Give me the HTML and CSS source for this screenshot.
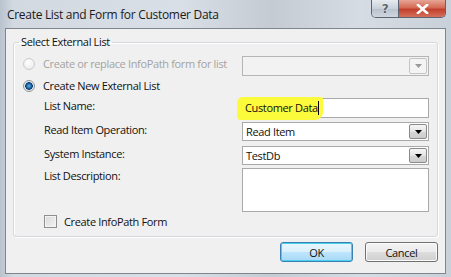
FILE: index.html
```html
<!DOCTYPE html>
<html lang="en">
<head>
  <meta charset="UTF-8" />
  <title>Create List and Form for Customer Data</title>
  <link rel="stylesheet" href="styles.css">
</head>
<body>

  <div class="window">
    <div class="titlebar">
      <span class="title">Create List and Form for Customer Data</span>
      <div class="caption-buttons">
        <div class="cap-btn help">?</div>
        <div class="cap-btn close">
          <svg width="13" height="10" viewBox="0 0 13 10">
            <path d="M2 1 L11 9 M11 1 L2 9" stroke="#fff" stroke-width="2.6" stroke-linecap="square" />
          </svg>
        </div>
      </div>
    </div>

    <div class="client">
      <fieldset class="group">
        <legend>Select External List</legend>

        <div class="row row-first">
          <div class="option disabled"><span class="radio"></span>Create or replace InfoPath form for list</div>
          <div class="combo disabled">
            <span class="arrow">
              <svg width="7" height="4" viewBox="0 0 7 4"><polygon points="0,0 7,0 3.5,4" fill="#9a9a9a" /></svg>
            </span>
          </div>
        </div>

        <div class="row row-new">
          <div class="option"><span class="radio checked"></span>Create New External List</div>
        </div>

        <div class="row row-name">
          <div class="field-label">List Name:</div>
          <div class="textbox">
            <span class="highlight"></span>
            <span class="value">Customer Data</span><span class="caret"></span>
          </div>
        </div>

        <div class="row row-read">
          <div class="field-label">Read Item Operation:</div>
          <div class="combo">
            <span class="value">Read Item</span>
            <span class="arrow">
              <svg width="7" height="4" viewBox="0 0 7 4"><polygon points="0,0 7,0 3.5,4" fill="#000" /></svg>
            </span>
          </div>
        </div>

        <div class="row row-system">
          <div class="field-label">System Instance:</div>
          <div class="combo">
            <span class="value">TestDb</span>
            <span class="arrow">
              <svg width="7" height="4" viewBox="0 0 7 4"><polygon points="0,0 7,0 3.5,4" fill="#000" /></svg>
            </span>
          </div>
        </div>

        <div class="row row-desc">
          <div class="field-label">List Description:</div>
          <div class="textarea"></div>
        </div>

        <div class="row row-check">
          <div class="field-label"><span class="checkbox"></span>Create InfoPath Form</div>
        </div>
      </fieldset>

      <div class="buttons">
        <button class="btn default">OK</button>
        <button class="btn">Cancel</button>
      </div>
    </div>
  </div>

</body>
</html>
```

FILE: styles.css
```css
:root {
  --frame: #c7d0da;
  --client-bg: #f0f0f0;
  --text: #111;
  --muted: #a3a3a3;
  --field-border: #a9a9a9;
  --font-stack: 'Open Sans', 'Noto Sans', sans-serif;
}

* {
  margin: 0;
  padding: 0;
  box-sizing: border-box;
}

body {
  width: 451px;
  height: 277px;
  overflow: hidden;
  font-family: var(--font-stack);
  font-size: 11px;
  letter-spacing: -0.35px;
  color: var(--text);
  background-color: var(--frame);
}

.window {
  width: 451px;
  height: 277px;
  display: flex;
  flex-direction: column;
  background: linear-gradient(90deg, #b9c3ce 0%, #d2d9e1 3%, #d9dfe6 40%, #c4cbd2 60%, #d6dce3 80%, #c8d0d9 100%);
}

/* title bar */
.titlebar {
  height: 28px;
  display: flex;
  justify-content: space-between;
  align-items: flex-start;
  padding-left: 7px;
  padding-right: 5px;
}

.title {
  font-size: 12px;
  letter-spacing: -0.3px;
  line-height: 29px;
  color: #1a1a1a;
}

.caption-buttons {
  display: flex;
  height: 18px;
  border: 1px solid #5b6470;
  border-top: none;
  border-radius: 0 0 5px 5px;
  overflow: hidden;
}

.cap-btn {
  height: 17px;
  display: flex;
  align-items: center;
  justify-content: center;
}

.help {
  width: 27px;
  border-right: 1px solid #5b6470;
  background: linear-gradient(#e6ebf0, #c9d0d8 50%, #b8c1cb 51%, #cfd6de);
  font-family: 'DejaVu Sans', sans-serif;
  font-weight: bold;
  font-size: 12px;
  color: #5d6670;
  text-shadow: 0 0 2px #fff;
}

.close {
  width: 46px;
  background: linear-gradient(#e6a595, #d46a55 45%, #c2402b 55%, #d4705c);
}

/* client area */
.client {
  height: 246px;
  margin: 0 5px 3px 5px;
  border: 1px solid #7f858c;
  background-color: var(--client-bg);
  display: flex;
  flex-direction: column;
}

.group {
  margin: 5px 7px 0 7px;
  padding: 6px 8px 7px 9px;
  border: 1px solid #d5d9dd;
  border-radius: 3px;
  box-shadow: inset 1px 1px 0 #fff, 1px 1px 0 #fff;
}

.group legend {
  margin-left: -4px;
  padding: 0 2px;
  line-height: 16px;
  font-size: 11px;
}

.row {
  display: flex;
  justify-content: space-between;
  align-items: flex-start;
}

.row-new { margin-top: 2px; }
.row-name { margin-top: 4px; }
.row-read { margin-top: 4px; }
.row-system { margin-top: 5px; }
.row-desc { margin-top: 3px; }
.row-check { margin-top: 2px; }

.option {
  display: flex;
  align-items: center;
  line-height: 16px;
  gap: 8px;
  white-space: nowrap;
}

.option.disabled {
  color: var(--muted);
}

.field-label {
  display: flex;
  align-items: center;
  gap: 7px;
  margin-left: 21px;
  line-height: 15px;
}

.radio {
  width: 12px;
  height: 12px;
  border-radius: 50%;
  border: 1px solid #c9cccf;
  background: radial-gradient(circle at 40% 35%, #ffffff, #e6e6e6);
}

.radio.checked {
  border-color: #8e9399;
  background: radial-gradient(circle, #64b6e6 0, #1a5f9c 2.5px, #0e3f6e 3.6px, #e2e5e8 4px, #f7f7f7 6px);
}

.checkbox {
  width: 13px;
  height: 13px;
  border: 1px solid #8f8f8f;
  background: linear-gradient(135deg, #d8d8d8, #f5f5f5);
  box-shadow: inset 0 0 0 1px #f4f4f4;
}

/* fields */
.combo,
.textbox,
.textarea {
  flex-shrink: 0;
  width: 187px;
  border: 1px solid var(--field-border);
  background-color: #fff;
}

.combo {
  height: 19px;
  display: flex;
  align-items: center;
  justify-content: space-between;
  padding-left: 3px;
}

.row-first .combo {
  height: 20px;
  justify-content: flex-end;
}

.combo.disabled {
  background-color: #f2f2f2;
  border-color: #b5b5b5;
}

.combo .value {
  line-height: 17px;
}

.arrow {
  width: 18px;
  height: calc(100% - 2px);
  margin-right: 1px;
  display: flex;
  align-items: center;
  justify-content: center;
  border: 1px solid #8a8a8a;
  border-radius: 2px;
  background: linear-gradient(#f6f6f6, #e4e4e4 50%, #d6d6d6 51%, #cdcdcd);
}

.combo.disabled .arrow {
  border-color: #c4c4c4;
  background: #f4f4f4;
}

.textbox {
  height: 20px;
  position: relative;
  display: flex;
  align-items: center;
  padding-left: 2px;
}

.textbox .value {
  position: relative;
  line-height: 16px;
}

.highlight {
  position: absolute;
  left: -6px;
  top: -2px;
  width: 86px;
  height: 23px;
  background-color: #fbfb3c;
  border-radius: 6px 2px 8px 4px;
}

.caret {
  position: relative;
  width: 1px;
  height: 14px;
  background-color: #000;
}

.textarea {
  height: 44px;
}

/* buttons */
.buttons {
  display: flex;
  justify-content: flex-end;
  gap: 12px;
  margin-top: 5px;
  padding-right: 7px;
}

.btn {
  width: 73px;
  height: 20px;
  font-family: var(--font-stack);
  font-size: 11px;
  letter-spacing: -0.35px;
  color: #111;
  border: 1px solid #707070;
  border-radius: 3px;
  background: linear-gradient(#f2f2f2, #ebebeb 50%, #dddddd 51%, #cfcfcf);
  box-shadow: inset 0 0 0 1px #fbfbfb;
}

.btn.default {
  border-color: #3c7fb1;
  box-shadow: inset 0 0 0 1px #48d0f0;
  background: linear-gradient(#eaf6fd, #d9f0fc 50%, #bee6fd 51%, #a7d9f5);
}
```
